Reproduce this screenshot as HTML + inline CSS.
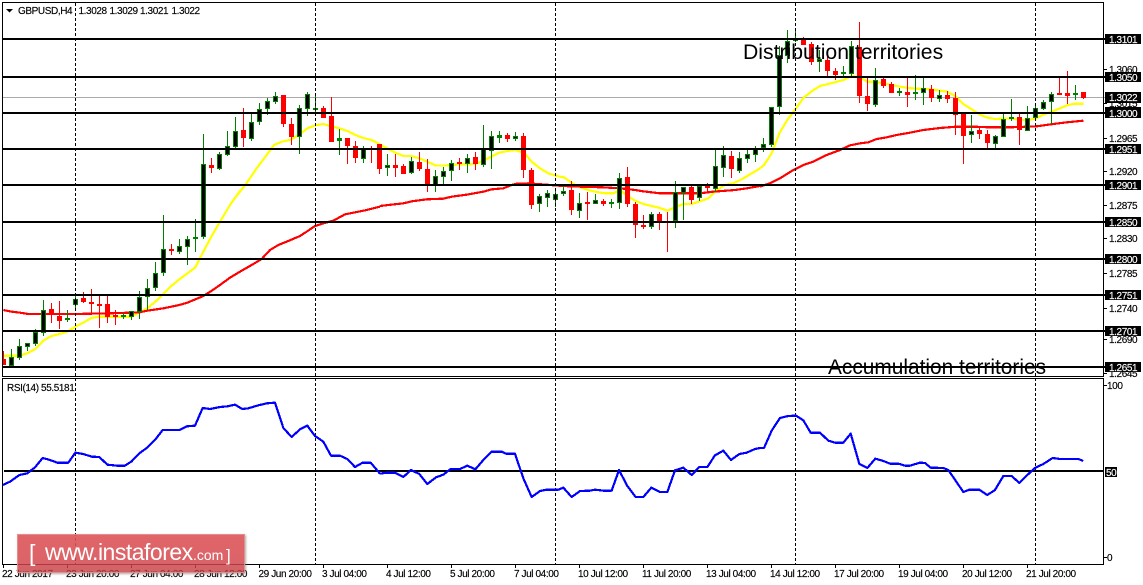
<!DOCTYPE html>
<html><head><meta charset="utf-8"><title>GBPUSD,H4</title>
<style>
html,body{margin:0;padding:0;background:#fff;width:1143px;height:585px;overflow:hidden}
svg{position:absolute;left:0;top:0}
text{font-family:"Liberation Sans",sans-serif;font-size:10px;letter-spacing:-.4px;fill:#000;stroke:#000;stroke-width:.15px}
text.w{fill:#fff;stroke:#fff}
text.big{font-size:21.2px;letter-spacing:0;stroke:none}
.wm text{stroke:none}
.wm{position:absolute;left:17px;top:534px;width:226px;height:37px;border:1px solid rgba(232,150,150,.8);background:linear-gradient(rgba(222,88,92,.92),rgba(214,74,80,.86) 65%,rgba(196,60,66,.8));box-shadow:1px 1px 2px rgba(120,120,120,.6)}
.ma polyline{shape-rendering:crispEdges}
</style></head><body>
<svg width="1143" height="585" viewBox="0 0 1143 585">
<defs><clipPath id="c"><rect x="3" y="3" width="1100" height="373"/></clipPath></defs>
<rect x="3" y="97" width="1103" height="1" fill="#aaa"/>
<g class="ma" fill="none" stroke-width="6.6" stroke-linejoin="round">
<g stroke="#ffff00">
<polyline transform="translate(0 190) scale(.33333)" points="10,497 35,497 58,497 82,490 106,477 130,452 154,438 178,432 202,425 226,410 250,398 274,384 298,380 322,380 346,380 370,380 394,380 418,368 442,355 466,335 490,312 514,288 538,268 562,250 586,232 610,185 634,140 660,95 690,45 722,0"/>
<polyline transform="scale(.33333)" points="700,600 738,552 770,505 800,465 822,435 846,425 870,420 898,404 922,385 946,376 970,372 990,378 1018,385 1042,393 1066,405 1090,414 1115,420 1138,432"/>
<polyline transform="translate(380 0) scale(.33333)" points="-2,433 22,445 46,458 70,468 94,468 118,475 142,485 166,496 190,497 214,495 240,493 262,493 286,492 310,482 334,470 358,458 382,453 405,450 430,458"/>
<polyline transform="translate(380 130) scale(.33333)" points="430,65 455,95 480,115 505,130 530,138 552,142 580,162 600,172 625,180 650,186 675,190 700,190 720,180 745,200 765,212 790,222 815,228 840,234 862,242 885,232 910,222 935,222 960,214 985,205 1010,180 1035,165 1060,160 1085,148 1115,130 1140,115"/>
<polyline transform="scale(.33333) translate(2280 0)" points="0,505 12,495 35,460 58,400 82,360 108,325 132,292 158,272 180,258 205,252 228,246 250,240 275,228 300,232 322,245 345,245 370,250 395,255 420,260 445,264 470,266 495,267 515,268 540,272 562,275 585,288 610,312 635,328 660,344 682,353 705,357 730,356 755,355 780,360 805,360 825,356 850,344 875,335 900,325 925,315 945,311 970,311"/>
</g>
<g stroke="#ff0000">
<polyline transform="translate(0 190) scale(.33333)" points="10,360 35,365 60,368 85,372 130,372 226,372 322,370 394,368 418,367 442,362 490,355 514,350 538,345 562,338 586,328 610,318 634,303 660,285 690,263 720,245 755,225 785,207 810,180 835,165 860,155 900,138 920,125 945,108 970,100 1000,92 1035,73 1070,66 1100,60 1140,50"/>
<polyline transform="translate(380 130) scale(.33333)" points="0,228 25,225 70,220 95,214 140,208 190,206 215,200 260,194 310,185 335,178 370,175 395,165 410,161 445,160 550,168 600,170 670,172 720,175 765,180 790,184 840,190 885,190 960,190 1000,185 1065,180 1100,175 1140,168"/>
<polyline transform="scale(.33333) translate(2280 0)" points="0,560 30,550 60,535 100,510 130,495 160,485 200,465 240,450 270,436 300,430 325,427 350,417 380,412 410,405 450,398 490,390 540,384 590,380 640,380 690,382 740,382 780,381 830,379 880,372 920,367 970,362"/>
</g>
</g>
<g clip-path="url(#c)" shape-rendering="crispEdges">
<!-- green wicks -->
<path fill="none" stroke="#007f00" stroke-width="1" d="M11.5 349V367M19.5 339V360M27.5 343V351M35.5 329V346M43.5 300V336M75.5 296V310M131.5 311V320M139.5 291V319M147.5 279V310M155.5 262V291M163.5 215V276M179.5 239V254M187.5 236V265M203.5 134V239M219.5 152V170M227.5 131V156M235.5 117V150M251.5 113V141M259.5 103V125M267.5 98V115M275.5 92V104M299.5 105V154M307.5 92V116M363.5 146V163M411.5 157V174M435.5 170V192M443.5 167V184M451.5 160V181M467.5 154V173M483.5 125V167M491.5 131V169M515.5 132V141M539.5 194V212M547.5 190V207M555.5 188V207M563.5 186V196M579.5 193V218M595.5 194V204M619.5 173V209M651.5 212V229M675.5 181V228M683.5 187V220M699.5 185V201M715.5 148V192M723.5 146V177M739.5 152V173M747.5 149V163M755.5 146V162M763.5 138V152M771.5 107V147M779.5 46V115M787.5 30V63M819.5 50V72M851.5 41V76M875.5 68V107M923.5 77V105M939.5 90V102M971.5 115V143M995.5 135V148M1003.5 112V137M1027.5 106V131M1035.5 104V120M1043.5 100V110M1051.5 92V124M67.5 310V322M123.5 313V319M195.5 219V252M315.5 96V112M339.5 129V155M387.5 154V176M499.5 131V143M611.5 199V208M795.5 31V42M843.5 66V77M899.5 88V96M915.5 75V100M1011.5 99V121M1075.5 85V100"/>
<!-- red wicks -->
<path fill="none" stroke="#ff0000" stroke-width="1" d="M3.5 351V365M51.5 303V323M59.5 301V329M83.5 292V303M91.5 289V315M99.5 295V328M107.5 295V323M115.5 310V325M171.5 244V255M211.5 158V173M243.5 108V147M283.5 95V127M291.5 118V145M323.5 106V118M331.5 97V142M347.5 138V164M355.5 141V163M371.5 146V163M379.5 144V174M395.5 154V177M403.5 164V174M419.5 152V171M427.5 159V192M459.5 158V170M475.5 152V170M507.5 133V142M523.5 133V178M531.5 168V209M571.5 181V215M587.5 192V220M603.5 199V206M627.5 167V207M635.5 202V238M643.5 215V229M659.5 212V230M667.5 212V252M691.5 185V204M707.5 183V192M731.5 151V178M803.5 37V45M811.5 42V65M827.5 57V77M835.5 68V80M859.5 22V103M867.5 78V111M883.5 76V88M891.5 82V93M907.5 78V107M931.5 85V102M947.5 91V103M955.5 92V135M963.5 113V164M979.5 126V139M987.5 130V149M1019.5 112V145M1059.5 77V95M1067.5 71V104M1083.5 92V99"/>
<!-- bull bodies -->
<path fill="#000" stroke="#007f00" stroke-width="1" d="M9.5 357.5h4V365.5h-4zM17.5 346.5h4V357.5h-4zM25.5 343.5h4V346.5h-4zM33.5 332.5h4V343.5h-4zM41.5 310.5h4V332.5h-4zM73.5 299.5h4V304.5h-4zM129.5 311.5h4V316.5h-4zM137.5 297.5h4V311.5h-4zM145.5 288.5h4V296.5h-4zM153.5 273.5h4V287.5h-4zM161.5 249.5h4V272.5h-4zM177.5 246.5h4V251.5h-4zM185.5 239.5h4V246.5h-4zM201.5 164.5h4V236.5h-4zM217.5 154.5h4V168.5h-4zM225.5 146.5h4V154.5h-4zM233.5 131.5h4V146.5h-4zM249.5 122.5h4V138.5h-4zM257.5 109.5h4V121.5h-4zM265.5 101.5h4V108.5h-4zM273.5 96.5h4V101.5h-4zM297.5 108.5h4V136.5h-4zM305.5 94.5h4V108.5h-4zM361.5 149.5h4V158.5h-4zM385.5 165.5h4V167.5h-4zM409.5 161.5h4V172.5h-4zM433.5 176.5h4V184.5h-4zM441.5 171.5h4V176.5h-4zM449.5 163.5h4V170.5h-4zM465.5 158.5h4V163.5h-4zM481.5 149.5h4V164.5h-4zM489.5 136.5h4V150.5h-4zM513.5 136.5h4V138.5h-4zM537.5 196.5h4V203.5h-4zM545.5 193.5h4V197.5h-4zM553.5 194.5h4V199.5h-4zM561.5 191.5h4V193.5h-4zM577.5 203.5h4V210.5h-4zM593.5 200.5h4V203.5h-4zM617.5 178.5h4V202.5h-4zM649.5 214.5h4V226.5h-4zM673.5 192.5h4V220.5h-4zM681.5 187.5h4V192.5h-4zM697.5 186.5h4V197.5h-4zM713.5 166.5h4V188.5h-4zM721.5 155.5h4V167.5h-4zM737.5 158.5h4V170.5h-4zM745.5 154.5h4V158.5h-4zM753.5 148.5h4V154.5h-4zM761.5 144.5h4V147.5h-4zM769.5 107.5h4V144.5h-4zM777.5 55.5h4V106.5h-4zM785.5 41.5h4V55.5h-4zM817.5 59.5h4V61.5h-4zM849.5 46.5h4V73.5h-4zM873.5 80.5h4V104.5h-4zM921.5 88.5h4V92.5h-4zM937.5 95.5h4V98.5h-4zM969.5 131.5h4V134.5h-4zM993.5 136.5h4V143.5h-4zM1001.5 119.5h4V136.5h-4zM1025.5 118.5h4V130.5h-4zM1033.5 108.5h4V117.5h-4zM1041.5 102.5h4V108.5h-4zM1049.5 94.5h4V101.5h-4z"/>
<!-- green dojis -->
<path fill="#007f00" d="M65 318h5v2h-5zM121 315h5v2h-5zM193 237h5v2h-5zM313 108h5v2h-5zM337 138h5v3h-5zM497 135h5v3h-5zM609 202h5v2h-5zM793 39h5v2h-5zM841 72h5v2h-5zM897 91h5v2h-5zM913 92h5v2h-5zM1009 117h5v2h-5zM1073 93h5v2h-5z"/>
<!-- red bodies -->
<path fill="#ff0000" d="M3 359h3V365h-3zM49 309h5V315h-5zM57 316h5V321h-5zM81 298h5V302h-5zM89 302h5V304h-5zM97 304h5V306h-5zM105 304h5V317h-5zM113 315h5V317h-5zM169 249h5V251h-5zM209 165h5V168h-5zM241 130h5V138h-5zM281 95h5V124h-5zM289 124h5V137h-5zM321 108h5V118h-5zM329 116h5V142h-5zM345 138h5V146h-5zM353 146h5V158h-5zM369 148h5V150h-5zM377 144h5V169h-5zM393 165h5V168h-5zM401 166h5V174h-5zM417 162h5V169h-5zM425 169h5V185h-5zM457 162h5V164h-5zM473 157h5V164h-5zM505 135h5V139h-5zM521 136h5V170h-5zM529 170h5V205h-5zM569 190h5V210h-5zM585 202h5V204h-5zM601 201h5V204h-5zM625 177h5V204h-5zM633 204h5V225h-5zM641 225h5V227h-5zM657 214h5V222h-5zM665 221h5V223h-5zM689 187h5V200h-5zM705 186h5V188h-5zM729 156h5V169h-5zM801 39h5V45h-5zM809 44h5V62h-5zM825 60h5V71h-5zM833 71h5V75h-5zM857 47h5V96h-5zM865 96h5V104h-5zM881 79h5V86h-5zM889 84h5V93h-5zM905 92h5V95h-5zM929 89h5V98h-5zM945 95h5V99h-5zM953 98h5V115h-5zM961 113h5V136h-5zM977 130h5V134h-5zM985 134h5V143h-5zM1017 117h5V130h-5zM1057 93h5V95h-5zM1065 93h5V96h-5zM1081 92h5V98h-5z"/>
</g>
<!-- horizontal levels -->
<g fill="#000">
<rect x="3" y="38" width="1103" height="2"/><rect x="3" y="76" width="1103" height="2"/><rect x="3" y="112" width="1103" height="2"/><rect x="3" y="148" width="1103" height="2"/><rect x="3" y="184" width="1103" height="2"/><rect x="3" y="221" width="1103" height="2"/><rect x="3" y="258" width="1103" height="2"/><rect x="3" y="294" width="1103" height="2"/><rect x="3" y="330" width="1103" height="2"/><rect x="3" y="366" width="1103" height="2"/>
<rect x="4" y="470" width="1100" height="2"/>
</g>
<!-- frames -->
<g fill="#000">
<rect x="2" y="2" width="1102" height="1"/>
<rect x="2" y="2" width="1" height="375"/>
<rect x="2" y="376" width="1102" height="1"/>
<rect x="2" y="378" width="1102" height="1"/>
<rect x="2" y="378" width="1" height="187"/>
<rect x="2" y="564" width="1102" height="1"/>
<rect x="1103" y="2" width="1" height="375"/>
<rect x="1103" y="378" width="1" height="187"/>
</g>
<!-- dashed verticals -->
<path fill="none" stroke="#000" stroke-width="1" stroke-dasharray="3 2" d="M75.5 3V564M315.5 3V564M555.5 3V564M795.5 3V564M1035.5 3V564"/>
<!-- RSI -->
<g class="ma" fill="none" stroke="#0000ff" stroke-width="6.6" stroke-linejoin="round">
<polyline transform="translate(0 380) scale(.33333)" points="9,315 30,305 58,285 82,280 105,262 128,234 150,240 172,248 205,248 226,218 250,222 275,230 298,231 322,254 350,257 375,257 395,244 418,220 440,204 468,176 488,150 538,150 560,139 585,137 608,84 630,87 660,81 682,79 705,74 727,87 745,85 775,76 800,70 825,68 850,144 875,171 900,148 922,137 945,168 970,185 993,227 1020,227 1042,237 1065,261 1088,248 1112,248 1140,281"/>
<polyline transform="translate(380 380) scale(.33333)" points="0,281 20,278 45,278 70,291 93,270 118,282 142,312 168,292 190,284 212,267 240,267 262,257 286,268 310,240 335,215 365,215 378,221 405,221 430,295 455,351 480,333 500,329 535,329 550,323 575,351 600,333 630,332 645,329 670,332 695,332 717,270 742,318 767,351 790,351 814,323 840,336 862,336 885,271 910,263 935,285 958,261 982,261 1005,226 1030,212 1053,240 1078,222 1100,218 1125,207 1140,204"/>
<polyline transform="translate(760 380) scale(.33333)" points="0,204 12,204 35,152 60,114 85,108 108,107 130,121 152,158 180,158 205,182 225,188 250,188 272,161 298,252 322,264 346,236 370,243 390,251 415,251 435,257 450,257 480,248 495,249 512,263 550,264 565,270 610,336 628,329 658,329 682,345 705,330 730,288 755,288 778,309 800,287 825,264 850,252 878,234 900,237 955,237 970,243"/>
</g>
<!-- ticks -->
<path fill="none" stroke="#000" stroke-width="1" d="M3.5 565v3M67.5 565v3M131.5 565v3M195.5 565v3M259.5 565v3M323.5 565v3M387.5 565v3M451.5 565v3M515.5 565v3M579.5 565v3M643.5 565v3M707.5 565v3M771.5 565v3M835.5 565v3M899.5 565v3M963.5 565v3M1027.5 565v3M1104 69.5h3M1104 103.5h3M1104 138.5h3M1104 171.5h3M1104 205.5h3M1104 238.5h3M1104 273.5h3M1104 308.5h3M1104 339.5h3M1104 373.5h3M1104 385.5h3M1104 557.5h3"/>
<!-- title -->
<path d="M6 9h7l-3.5 3.5z" fill="#000"/>
<text x="18" y="14">GBPUSD,H4</text><text x="78.5" y="14">1.3028</text><text x="109.5" y="14">1.3029</text><text x="140" y="14">1.3021</text><text x="171.5" y="14">1.3022</text>
<text x="7" y="391">RSI(14) 55.5181</text>
<!-- axis prices -->
<text x="1109" y="73">1.3060</text><text x="1109" y="107">1.3015</text><text x="1109" y="142">1.2965</text><text x="1109" y="175">1.2920</text><text x="1109" y="209">1.2875</text><text x="1109" y="242">1.2830</text><text x="1109" y="277">1.2785</text><text x="1109" y="312">1.2740</text><text x="1109" y="343">1.2690</text><text x="1109" y="377">1.2645</text>
<text x="1107" y="389">100</text><text x="1107" y="561">0</text>
<!-- boxes -->
<g fill="#000">
<rect x="1105" y="34" width="36" height="10"/><rect x="1105" y="72" width="36" height="10"/><rect x="1105" y="92" width="36" height="11"/><rect x="1105" y="107" width="36" height="11"/><rect x="1105" y="144" width="36" height="10"/><rect x="1105" y="180" width="36" height="10"/><rect x="1105" y="217" width="36" height="10"/><rect x="1105" y="254" width="36" height="10"/><rect x="1105" y="290" width="36" height="10"/><rect x="1105" y="326" width="36" height="10"/><rect x="1105" y="362" width="36" height="10"/><rect x="1105" y="467" width="12" height="10"/>
</g>
<text class="w" x="1109" y="43">1.3101</text><text class="w" x="1109" y="81">1.3050</text><text class="w" x="1109" y="101">1.3022</text><text class="w" x="1109" y="117">1.3000</text><text class="w" x="1109" y="153">1.2951</text><text class="w" x="1109" y="189">1.2901</text><text class="w" x="1109" y="226">1.2850</text><text class="w" x="1109" y="263">1.2800</text><text class="w" x="1109" y="299">1.2751</text><text class="w" x="1109" y="335">1.2701</text><text class="w" x="1109" y="371">1.2651</text><text class="w" x="1106" y="476">50</text>
<!-- date labels -->
<text x="2" y="577">22 Jun 2017</text><text x="66" y="577">23 Jun 20:00</text><text x="130" y="577">27 Jun 04:00</text><text x="194" y="577">28 Jun 12:00</text><text x="258.5" y="577">29 Jun 20:00</text><text x="322" y="577">3 Jul 04:00</text><text x="386" y="577">4 Jul 12:00</text><text x="450" y="577">5 Jul 20:00</text><text x="514" y="577">7 Jul 04:00</text><text x="578" y="577">10 Jul 12:00</text><text x="642" y="577">11 Jul 20:00</text><text x="706" y="577">13 Jul 04:00</text><text x="770" y="577">14 Jul 12:00</text><text x="834" y="577">17 Jul 20:00</text><text x="898" y="577">19 Jul 04:00</text><text x="962" y="577">20 Jul 12:00</text><text x="1026" y="577">21 Jul 20:00</text>
<!-- annotations -->
<text class="big" x="743" y="59">Distribution territories</text>
<text class="big" x="828" y="374" textLength="218" lengthAdjust="spacingAndGlyphs">Accumulation territories</text>
</svg>
<div class="wm"></div>
<svg class="wm-t" width="1143" height="585" viewBox="0 0 1143 585" style="position:absolute;left:0;top:0">
<text x="29" y="561" style="font-size:23px;letter-spacing:0;fill:#fff;stroke:none">[</text>
<text x="45" y="560" style="font-size:23px;letter-spacing:-.5px;fill:#fff;stroke:none">www.instaforex</text>
<text x="193" y="560" style="font-size:14px;letter-spacing:0;fill:#fff;stroke:none">.com</text>
<text x="226" y="561" style="font-size:17px;letter-spacing:0;fill:#fff;stroke:none">]</text>
</svg>
</body></html>
